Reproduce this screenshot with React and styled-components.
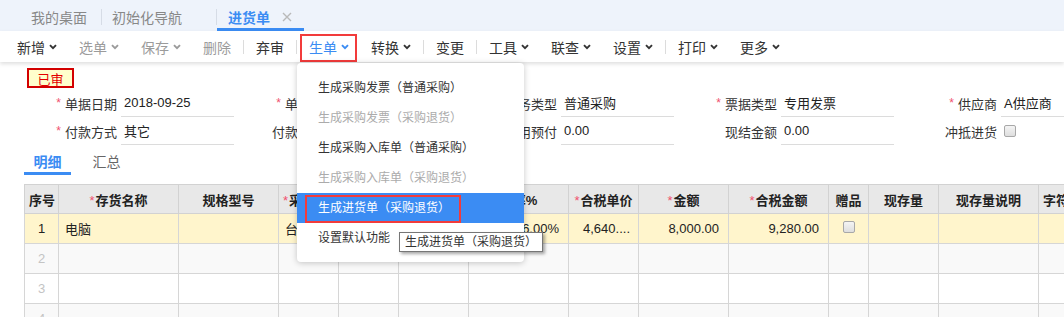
import React from 'react';
import styled, { createGlobalStyle } from 'styled-components';

const BLUE = '#3b8cf3';

const GlobalStyle = createGlobalStyle`
  html, body { margin: 0; padding: 0; background: #fff; }
  body { font-family: "Liberation Sans", "Noto Sans CJK SC", sans-serif; color: #333; }
  * { box-sizing: border-box; }
`;

const Page = styled.div`
  position: relative;
  width: 1064px;
  height: 317px;
  overflow: hidden;
  background: #fff;
`;

/* ---------- top tab bar ---------- */
const TabBar = styled.div`
  display: flex;
  height: 31px;
  padding-left: 17px;
  background: #eef3fb;
`;

const Tab = styled.div`
  display: flex;
  align-items: center;
  width: ${p => p.$w}px;
  padding-left: ${p => p.$pl}px;
  padding-top: 6px;
  border-bottom: 3px solid ${p => (p.$active ? BLUE : 'transparent')};
  font-size: 14px;
  white-space: nowrap;
  color: ${p => (p.$active ? BLUE : '#888')};
  font-weight: ${p => (p.$active ? 700 : 400)};
`;

const TabDivider = styled.span`
  width: 1px;
  height: 16px;
  align-self: center;
  margin-top: 3px;
  background: #d6dce6;
`;

const CloseIcon = styled.svg`
  margin-left: 12px;
  flex: none;
`;

/* ---------- toolbar ---------- */
const Toolbar = styled.div`
  position: relative;
  z-index: 1;
  display: flex;
  align-items: center;
  height: 31px;
  padding-left: 6px;
  background: #fff;
  box-shadow: 0 2px 4px rgba(0, 0, 0, 0.13);
`;

const ToolButton = styled.div`
  position: relative;
  display: flex;
  align-items: center;
  gap: 4px;
  height: 100%;
  padding: 0 11px;
  font-size: 14px;
  white-space: nowrap;
  color: ${p => (p.$tone === 'active' ? BLUE : p.$tone === 'disabled' ? '#9b9b9b' : '#333')};
`;

const ToolSep = styled.span`
  width: 1px;
  height: 14px;
  margin: 0 1px;
  background: #dcdcdc;
`;

const FocusMark = styled.span`
  position: absolute;
  left: 2px;
  right: 3px;
  top: 3px;
  bottom: 0;
  border: 2px solid #f23b3b;
  pointer-events: none;
`;

/* ---------- form ---------- */
const Stamp = styled.div`
  display: flex;
  align-items: center;
  justify-content: center;
  width: 47px;
  height: 20px;
  margin: 6px 0 0 27px;
  border: 2px solid #d30000;
  background: #ffffcc;
  color: #e40000;
  font-size: 13px;
`;

const Form = styled.div`
  display: grid;
  grid-template-columns: repeat(5, 220px);
  grid-auto-rows: 28px;
  padding-left: 14px;
  margin-top: 1px;
`;

const Field = styled.div`
  display: flex;
  align-items: stretch;
`;

const Label = styled.div`
  width: 103px;
  display: flex;
  align-items: center;
  justify-content: flex-end;
  font-size: 13px;
  color: #333;
  white-space: nowrap;
`;

const Req = styled.span`
  color: #f0506e;
  font-size: 12px;
  margin-right: 4px;
`;

const Value = styled.div`
  width: 113px;
  margin-left: 4px;
  display: flex;
  align-items: center;
  padding-left: 3px;
  font-size: 13px;
  color: #222;
  white-space: nowrap;
  overflow: hidden;
  border-bottom: ${p => (p.$plain ? 'none' : '1px solid #dcdcdc')};
`;

const Check = styled.span`
  display: inline-block;
  width: 12px;
  height: 12px;
  border: 1px solid #a8a8a8;
  border-radius: 2px;
  background: linear-gradient(#f4f4f4, #dedede);
`;

/* ---------- detail tabs ---------- */
const DetailTabs = styled.div`
  display: flex;
  gap: 12px;
  padding-left: 24px;
  margin-top: 2px;
`;

const DetailTab = styled.div`
  width: 47px;
  height: 28px;
  padding-top: 3px;
  display: flex;
  align-items: center;
  justify-content: center;
  font-size: 14px;
  border-bottom: 3px solid ${p => (p.$active ? BLUE : 'transparent')};
  color: ${p => (p.$active ? BLUE : '#666')};
  font-weight: ${p => (p.$active ? 700 : 400)};
`;

/* ---------- grid ---------- */
const TableWrap = styled.div`
  padding-left: 24px;
  margin-top: 9px;
`;

const Grid = styled.table`
  border-collapse: collapse;
  table-layout: fixed;
  width: ${p => p.$w}px;
  font-size: 13px;
`;

const HeadCell = styled.th`
  height: 29px;
  padding: 0 4px;
  background: #e8e8e8;
  border: 1px solid #d2d2d2;
  font-weight: 700;
  color: #222;
  text-align: center;
  white-space: nowrap;
  overflow: hidden;
`;

const HeadStar = styled.span`
  color: #f0506e;
  font-weight: 400;
  margin-right: 1px;
`;

const Row = styled.tr`
  background: ${p => p.$bg};
`;

const Cell = styled.td`
  height: 30px;
  padding: 0 ${p => (p.$align === 'right' ? '9px' : '6px')};
  border: 1px solid #d6d6d6;
  text-align: ${p => p.$align || 'left'};
  white-space: nowrap;
  overflow: hidden;
  color: ${p => (p.$muted ? '#c4c4c4' : '#222')};
`;

/* ---------- dropdown + tooltip ---------- */
const Menu = styled.div`
  position: absolute;
  left: 297px;
  top: 63px;
  width: 227px;
  padding: 10px 0 9px;
  background: #fff;
  border-radius: 4px;
  box-shadow: 0 1px 6px rgba(0, 0, 0, 0.22);
  z-index: 5;
`;

const MenuItem = styled.div`
  position: relative;
  height: 30px;
  line-height: 30px;
  padding-left: 21px;
  font-size: 12px;
  white-space: nowrap;
  color: ${p => (p.$active ? '#fff' : p.$disabled ? '#ababab' : '#333')};
  background: ${p => (p.$active ? BLUE : 'transparent')};
`;

const Annotation = styled.span`
  position: absolute;
  left: 8px;
  top: 2px;
  bottom: 0;
  width: 156px;
  border: 2px solid #f23b3b;
`;

const Tooltip = styled.div`
  position: absolute;
  left: 399px;
  top: 232px;
  width: 144px;
  height: 20px;
  padding-left: 5px;
  border: 1px solid #767676;
  background: #fff;
  color: #333;
  font-size: 12px;
  line-height: 18px;
  white-space: nowrap;
  box-shadow: 2px 2px 3px rgba(0, 0, 0, 0.35);
  z-index: 6;
`;

const Chevron = () => (
  <svg width="8" height="6" viewBox="0 0 8 6">
    <path d="M1 1.2 L4 4.2 L7 1.2" fill="none" stroke="currentColor" strokeWidth="1.9" />
  </svg>
);

const tools = [
  { t: '新增', dd: true },
  { t: '选单', dd: true, tone: 'disabled' },
  { t: '保存', dd: true, tone: 'disabled' },
  { t: '删除', tone: 'disabled' },
  { sep: true },
  { t: '弃审' },
  { sep: true },
  { t: '生单', dd: true, tone: 'active', mark: true },
  { t: '转换', dd: true },
  { sep: true },
  { t: '变更' },
  { sep: true },
  { t: '工具', dd: true },
  { t: '联查', dd: true },
  { t: '设置', dd: true },
  { sep: true },
  { t: '打印', dd: true },
  { t: '更多', dd: true },
];

const fields = [
  { l: '单据日期', v: '2018-09-25', r: true },
  { l: '单据编号', v: 'JH-2018-09-0001', r: true },
  { l: '业务类型', v: '普通采购', r: true },
  { l: '票据类型', v: '专用发票', r: true },
  { l: '供应商', v: 'A供应商', r: true },
  { l: '付款方式', v: '其它', r: true },
  { l: '付款截止日', v: '' },
  { l: '使用预付', v: '0.00' },
  { l: '现结金额', v: '0.00' },
  { l: '冲抵进货', check: true },
];

const cols = [
  { h: '序号', w: 34 },
  { h: '存货名称', w: 120, r: true },
  { h: '规格型号', w: 100 },
  { h: '采购单位', w: 60, r: true },
  { h: '数量', w: 60, r: true },
  { h: '单价', w: 70 },
  { h: '税率%', w: 100 },
  { h: '合税单价', w: 70, r: true },
  { h: '金额', w: 90, r: true },
  { h: '合税金额', w: 100, r: true },
  { h: '赠品', w: 40 },
  { h: '现存量', w: 70 },
  { h: '现存量说明', w: 100 },
  { h: '字符型扩展', w: 60 },
];

const menuItems = [
  { t: '生成采购发票（普通采购）' },
  { t: '生成采购发票（采购退货）', disabled: true },
  { t: '生成采购入库单（普通采购）' },
  { t: '生成采购入库单（采购退货）', disabled: true },
  { t: '生成进货单（采购退货）', active: true },
  { t: '设置默认功能' },
];

const rowBgs = ['#fff5cc', '#f9f9f9', '#ffffff', '#f9f9f9'];

export default function App() {
  const total = cols.reduce((s, c) => s + c.w, 0);
  return (
    <Page>
      <GlobalStyle />
      <TabBar>
        <Tab $w={84} $pl={14}>我的桌面</Tab>
        <TabDivider />
        <Tab $w={114} $pl={10}>初始化导航</Tab>
        <TabDivider />
        <Tab $w={87} $pl={11} $active>
          进货单
          <CloseIcon width="10" height="10" viewBox="0 0 10 10">
            <path d="M1 1 L9 9 M9 1 L1 9" stroke="#b9b9b9" strokeWidth="1.4" />
          </CloseIcon>
        </Tab>
      </TabBar>

      <Toolbar>
        {tools.map((b, i) =>
          b.sep ? (
            <ToolSep key={i} />
          ) : (
            <ToolButton key={i} $tone={b.tone}>
              {b.t}
              {b.dd && <Chevron />}
              {b.mark && <FocusMark />}
            </ToolButton>
          )
        )}
      </Toolbar>

      <Stamp>已审</Stamp>

      <Form>
        {fields.map((f, i) => (
          <Field key={i}>
            <Label>
              {f.r && <Req>*</Req>}
              {f.l}
            </Label>
            {f.check ? (
              <Value $plain>
                <Check />
              </Value>
            ) : (
              <Value>{f.v}</Value>
            )}
          </Field>
        ))}
      </Form>

      <DetailTabs>
        <DetailTab $active>明细</DetailTab>
        <DetailTab>汇总</DetailTab>
      </DetailTabs>

      <TableWrap>
        <Grid $w={total}>
          <colgroup>
            {cols.map((c, i) => (
              <col key={i} style={{ width: c.w }} />
            ))}
          </colgroup>
          <thead>
            <tr>
              {cols.map((c, i) => (
                <HeadCell key={i}>
                  {c.r && <HeadStar>*</HeadStar>}
                  {c.h}
                </HeadCell>
              ))}
            </tr>
          </thead>
          <tbody>
            <Row $bg={rowBgs[0]}>
              <Cell $align="center">1</Cell>
              <Cell>电脑</Cell>
              <Cell />
              <Cell>台</Cell>
              <Cell $align="right">10.00</Cell>
              <Cell $align="right">800.00</Cell>
              <Cell $align="right">16.00%</Cell>
              <Cell $align="right" style={{ paddingRight: 8 }}>4,640....</Cell>
              <Cell $align="right">8,000.00</Cell>
              <Cell $align="right">9,280.00</Cell>
              <Cell $align="center"><Check /></Cell>
              <Cell />
              <Cell />
              <Cell />
            </Row>
            {[2, 3, 4].map(n => (
              <Row key={n} $bg={rowBgs[n - 1]}>
                <Cell $align="center" $muted>{n}</Cell>
                {cols.slice(1).map((c, i) => (
                  <Cell key={i} />
                ))}
              </Row>
            ))}
          </tbody>
        </Grid>
      </TableWrap>

      <Menu>
        {menuItems.map((m, i) => (
          <MenuItem key={i} $active={m.active} $disabled={m.disabled}>
            {m.t}
            {m.active && <Annotation />}
          </MenuItem>
        ))}
      </Menu>

      <Tooltip>生成进货单（采购退货）</Tooltip>
    </Page>
  );
}
